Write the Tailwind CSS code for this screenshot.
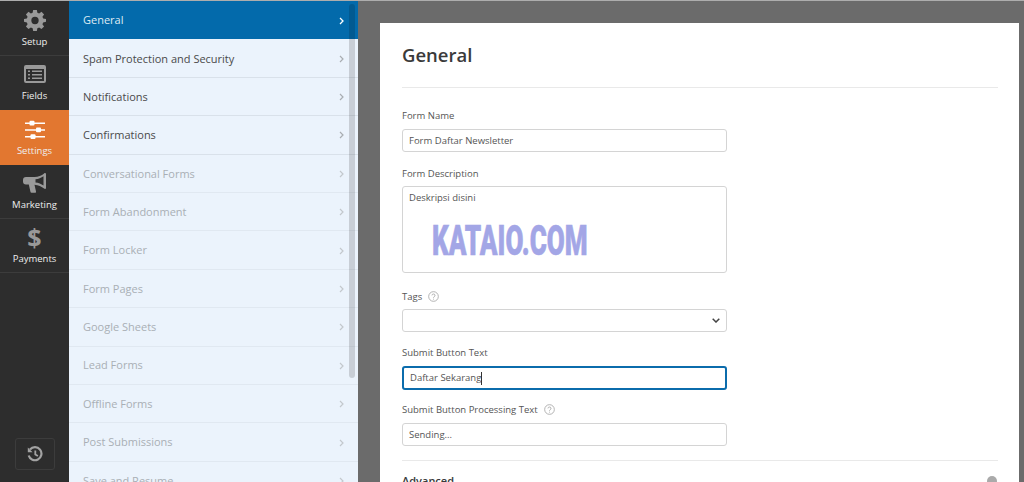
<!DOCTYPE html>
<html lang="en">
  <head>
    <meta charset="utf-8" />
    <title>Form settings</title>
    <script src="https://cdn.jsdelivr.net/npm/@tailwindcss/browser@4"></script>
  </head>
  <body class="h-[482px] overflow-hidden bg-[#6b6b6b] font-['Open_Sans',sans-serif] text-[#4a4a4a]">
    <div class="flex h-[482px] overflow-hidden border-t border-[#adadad]">
      <!-- icon rail -->
      <nav class="flex h-full w-[69px] shrink-0 flex-col bg-[#2d2d2d] text-[9.500px] text-[#eeeeee]">
        <a class="flex h-[55px] flex-col items-center border-b border-[#3c3c3c] pt-[8px]">
          <svg class="h-[22px] w-[22px]" viewBox="0 0 24 24" fill="#999">
            <path fill-rule="evenodd" d="M10 1h4l.6 3.100 1.900.8L19.100 3.100 21.900 5.900 20.100 8.500l.8 1.900L24 11v3l-3.100.6-.8 1.900 1.800 2.600-2.800 2.800-2.600-1.800-1.900.8L14 24h-4l-.6-3.100-1.900-.8-2.600 1.800-2.800-2.800 1.800-2.600-.8-1.900L0 14v-3l3.100-.6.8-1.900L2.100 5.900 4.900 3.100l2.600 1.800 1.900-.8L10 1zm2 7.500a4 4 0 1 0 0 8 4 4 0 0 0 0-8z" />
          </svg>
          <span class="mt-[4px] leading-[14px]">Setup</span>
        </a>
        <a class="flex h-[54px] flex-col items-center pt-[9px]">
          <svg class="h-[18px] w-[22px]" viewBox="0 0 22 18" fill="#999">
            <path fill-rule="evenodd" d="M2 0h18a2 2 0 0 1 2 2v14a2 2 0 0 1-2 2H2a2 2 0 0 1-2-2V2a2 2 0 0 1 2-2zm0 4v12h18V4H2zm2 1.500h2V7H4V5.500zm4 0h10V7H8V5.500zM4 9h2v1.500H4V9zm4 0h10v1.500H8V9zm-4 3.500h2V14H4v-1.500zm4 0h10V14H8v-1.500z" />
          </svg>
          <span class="mt-[6px] leading-[14px]">Fields</span>
        </a>
        <a class="flex h-[55px] flex-col items-center bg-[#e27730] pt-[10px]">
          <svg class="h-[20px] w-[20px]" viewBox="0 0 20 20" fill="#fff">
            <path d="M0 2.500h20v1.500H0zM0 9.200h20v1.500H0zM0 16h20v1.500H0z" />
            <rect x="4.500" y="0.800" width="5" height="4.800" rx="1" />
            <rect x="11" y="7.500" width="5" height="4.800" rx="1" />
            <rect x="5.500" y="14.300" width="5" height="4.800" rx="1" />
          </svg>
          <span class="mt-[4px] leading-[14px]">Settings</span>
        </a>
        <a class="flex h-[54px] flex-col items-center border-b border-[#3c3c3c] pt-[8px]">
          <svg class="h-[21px] w-[23px]" viewBox="0 0 23 21" fill="#999">
            <path d="M22 0a1 1 0 0 1 1 1v14a1 1 0 0 1-1 1c-.4 0-.6-.2-.9-.4C18.500 13.400 15.500 11.900 11.500 11.700L13 18.500a1 1 0 0 1-1 1.300H8.500a1 1 0 0 1-1-.8L5.800 11.500H3a3 3 0 0 1-3-3V7a3 3 0 0 1 3-3h8.500c3.800-.1 7-1.500 9.600-3.600.3-.2.500-.4.900-.4zm-1.500 3.300c-2.300 1.600-5 2.700-8 3v3.300c3 .3 5.700 1.400 8 3V3.300z" />
          </svg>
          <span class="mt-[4px] leading-[14px]">Marketing</span>
        </a>
        <a class="flex h-[54px] flex-col items-center border-b border-[#3c3c3c] pt-[4px]">
          <span class="h-[28px] text-[25px] font-bold leading-[28px] text-[#999]">$</span>
          <span class="mt-[1px] leading-[14px]">Payments</span>
        </a>
        <button class="mx-auto mb-[12px] mt-auto flex h-[32px] w-[40px] items-center justify-center rounded-[3px] border border-[#3c3c3c]">
          <svg class="h-[16px] w-[16px]" viewBox="0 0 16 16" fill="none" stroke="#a3a3a3" stroke-width="2.200">
            <path d="M3 3.500A6.500 6.500 0 1 1 1.700 9.500" />
            <path d="M8.300 4.500v4l2.600 1.600" stroke-width="1.800" />
            <path d="M.8 1.500v4.800h4.800z" fill="#a3a3a3" stroke="none" />
          </svg>
        </button>
      </nav>

      <!-- section list -->
      <div class="relative h-full w-[289px] shrink-0 overflow-hidden bg-[#ebf3fc] text-[11px]">
        <a class="flex h-[38px] items-center justify-between bg-[#036aab] pl-[14px] pr-[14px] pt-[1px] text-[#dfeaf3]">
          General
          <svg class="h-[8px] w-[5px]" viewBox="0 0 5 8" fill="none" stroke="#fff" stroke-width="1.300"><path d="M1 1l3 3-3 3" /></svg>
        </a>
        <a class="flex h-[38.800px] items-center justify-between border-b border-[#d9e1ea] pl-[14px] pr-[14px] pt-[2px]">
          Spam Protection and Security
          <svg class="h-[8px] w-[5px]" viewBox="0 0 5 8" fill="none" stroke="#a9adb2" stroke-width="1.200"><path d="M1 1l3 3-3 3" /></svg>
        </a>
        <a class="flex h-[38.400px] items-center justify-between border-b border-[#d9e1ea] pl-[14px] pr-[14px] pt-[1px]">
          Notifications
          <svg class="h-[8px] w-[5px]" viewBox="0 0 5 8" fill="none" stroke="#a9adb2" stroke-width="1.200"><path d="M1 1l3 3-3 3" /></svg>
        </a>
        <a class="flex h-[38.400px] items-center justify-between border-b border-[#d9e1ea] pl-[14px] pr-[14px] pt-[1px]">
          Confirmations
          <svg class="h-[8px] w-[5px]" viewBox="0 0 5 8" fill="none" stroke="#a9adb2" stroke-width="1.200"><path d="M1 1l3 3-3 3" /></svg>
        </a>
        <a class="flex h-[38.400px] items-center justify-between border-b border-[#e0e8f1] pl-[14px] pr-[14px] pt-[1px] text-[#a9afb5]">
          Conversational Forms
          <svg class="h-[8px] w-[5px]" viewBox="0 0 5 8" fill="none" stroke="#c3c8cd" stroke-width="1.200"><path d="M1 1l3 3-3 3" /></svg>
        </a>
        <a class="flex h-[38.400px] items-center justify-between border-b border-[#e0e8f1] pl-[14px] pr-[14px] pt-[1px] text-[#a9afb5]">
          Form Abandonment
          <svg class="h-[8px] w-[5px]" viewBox="0 0 5 8" fill="none" stroke="#c3c8cd" stroke-width="1.200"><path d="M1 1l3 3-3 3" /></svg>
        </a>
        <a class="flex h-[38.400px] items-center justify-between border-b border-[#e0e8f1] pl-[14px] pr-[14px] pt-[1px] text-[#a9afb5]">
          Form Locker
          <svg class="h-[8px] w-[5px]" viewBox="0 0 5 8" fill="none" stroke="#c3c8cd" stroke-width="1.200"><path d="M1 1l3 3-3 3" /></svg>
        </a>
        <a class="flex h-[38.400px] items-center justify-between border-b border-[#e0e8f1] pl-[14px] pr-[14px] pt-[1px] text-[#a9afb5]">
          Form Pages
          <svg class="h-[8px] w-[5px]" viewBox="0 0 5 8" fill="none" stroke="#c3c8cd" stroke-width="1.200"><path d="M1 1l3 3-3 3" /></svg>
        </a>
        <a class="flex h-[38.400px] items-center justify-between border-b border-[#e0e8f1] pl-[14px] pr-[14px] pt-[1px] text-[#a9afb5]">
          Google Sheets
          <svg class="h-[8px] w-[5px]" viewBox="0 0 5 8" fill="none" stroke="#c3c8cd" stroke-width="1.200"><path d="M1 1l3 3-3 3" /></svg>
        </a>
        <a class="flex h-[38.400px] items-center justify-between border-b border-[#e0e8f1] pl-[14px] pr-[14px] pt-[1px] text-[#a9afb5]">
          Lead Forms
          <svg class="h-[8px] w-[5px]" viewBox="0 0 5 8" fill="none" stroke="#c3c8cd" stroke-width="1.200"><path d="M1 1l3 3-3 3" /></svg>
        </a>
        <a class="flex h-[38.400px] items-center justify-between border-b border-[#e0e8f1] pl-[14px] pr-[14px] pt-[1px] text-[#a9afb5]">
          Offline Forms
          <svg class="h-[8px] w-[5px]" viewBox="0 0 5 8" fill="none" stroke="#c3c8cd" stroke-width="1.200"><path d="M1 1l3 3-3 3" /></svg>
        </a>
        <a class="flex h-[38.400px] items-center justify-between border-b border-[#e0e8f1] pl-[14px] pr-[14px] pt-[1px] text-[#a9afb5]">
          Post Submissions
          <svg class="h-[8px] w-[5px]" viewBox="0 0 5 8" fill="none" stroke="#c3c8cd" stroke-width="1.200"><path d="M1 1l3 3-3 3" /></svg>
        </a>
        <a class="flex h-[38.400px] items-center justify-between pl-[14px] pr-[14px] pt-[1px] text-[#a9afb5]">
          Save and Resume
          <svg class="h-[8px] w-[5px]" viewBox="0 0 5 8" fill="none" stroke="#c3c8cd" stroke-width="1.200"><path d="M1 1l3 3-3 3" /></svg>
        </a>
        <!-- scrollbar thumb -->
        <div class="absolute right-[3px] top-[3px] h-[374px] w-[6px] rounded-full bg-black/15"></div>
      </div>

      <!-- form panel -->
      <main class="min-w-0 flex-1 pl-[22px] pr-[5px] pt-[22px]">
        <div class="h-[520px] bg-white pl-[22px] pr-[21px] text-[9.500px] text-[#555]">
          <h1 class="pb-[19px] pt-[18px] text-[18.500px] font-semibold leading-[27px] text-[#3a3a3a]">General</h1>
          <div class="border-t border-[#e9e9e9]"></div>

          <div class="w-[325px]">
            <label class="mt-[20px] block h-[21px] leading-[15px]">Form Name</label>
            <div class="flex h-[23px] items-center rounded-[3px] border border-[#d4d4d4] px-[6px] pt-[2px]">Form Daftar Newsletter</div>

            <label class="mt-[14px] block h-[20px] leading-[15px]">Form Description</label>
            <div class="relative h-[87px] rounded-[3px] border border-[#d4d4d4] px-[6px] pt-[3px] leading-[15px]">
              Deskripsi disini
              <span class="absolute left-[29px] top-[32px] origin-left scale-x-[0.62] whitespace-nowrap font-['Roboto',sans-serif] text-[42px] font-black leading-[44px] text-[#a3a6e6] [-webkit-text-stroke:0.6px_#a3a6e6]">KATAIO.COM</span>
            </div>

            <label class="mt-[16px] flex h-[20px] items-start gap-[6px] leading-[15px]">
              Tags
              <svg class="mt-[2px] h-[11px] w-[11px]" viewBox="0 0 10 10" fill="none" stroke="#aaa" stroke-width="0.800"><circle cx="5" cy="5" r="4.400" /><path d="M3.600 4a1.400 1.300 0 1 1 2 1.200c-.4.200-.6.500-.6 1M5 7v.8" /></svg>
            </label>
            <div class="flex h-[23px] items-center justify-end rounded-[3px] border border-[#d4d4d4] pr-[6px]">
              <svg class="h-[5px] w-[8px]" viewBox="0 0 8 5" fill="none" stroke="#444" stroke-width="1.500"><path d="M.7.700L4 4l3.300-3.300" /></svg>
            </div>

            <label class="mt-[13px] block h-[21px] leading-[15px]">Submit Button Text</label>
            <div class="flex h-[24px] items-center rounded-[3px] border-2 border-[#0b6cac] px-[6px] pt-[1px]">Daftar Sekarang<span class="h-[13px] w-px bg-[#333]"></span></div>

            <label class="mt-[12px] flex h-[21px] items-start gap-[6px] leading-[15px]">
              Submit Button Processing Text
              <svg class="mt-[2px] h-[11px] w-[11px]" viewBox="0 0 10 10" fill="none" stroke="#aaa" stroke-width="0.800"><circle cx="5" cy="5" r="4.400" /><path d="M3.600 4a1.400 1.300 0 1 1 2 1.200c-.4.200-.6.500-.6 1M5 7v.8" /></svg>
            </label>
            <div class="flex h-[23px] items-center rounded-[3px] border border-[#d4d4d4] px-[6px] pt-[2px]">Sending...</div>
          </div>

          <div class="mt-[14px] border-t border-[#e9e9e9]"></div>
          <div class="mt-[12px] flex items-center justify-between text-[11px] font-semibold leading-[16px] text-[#3a3a3a]">
            Advanced
            <span class="mr-[1px] h-[10px] w-[10px] rounded-full bg-[#aaa]"></span>
          </div>
        </div>
      </main>
    </div>
  </body>
</html>
